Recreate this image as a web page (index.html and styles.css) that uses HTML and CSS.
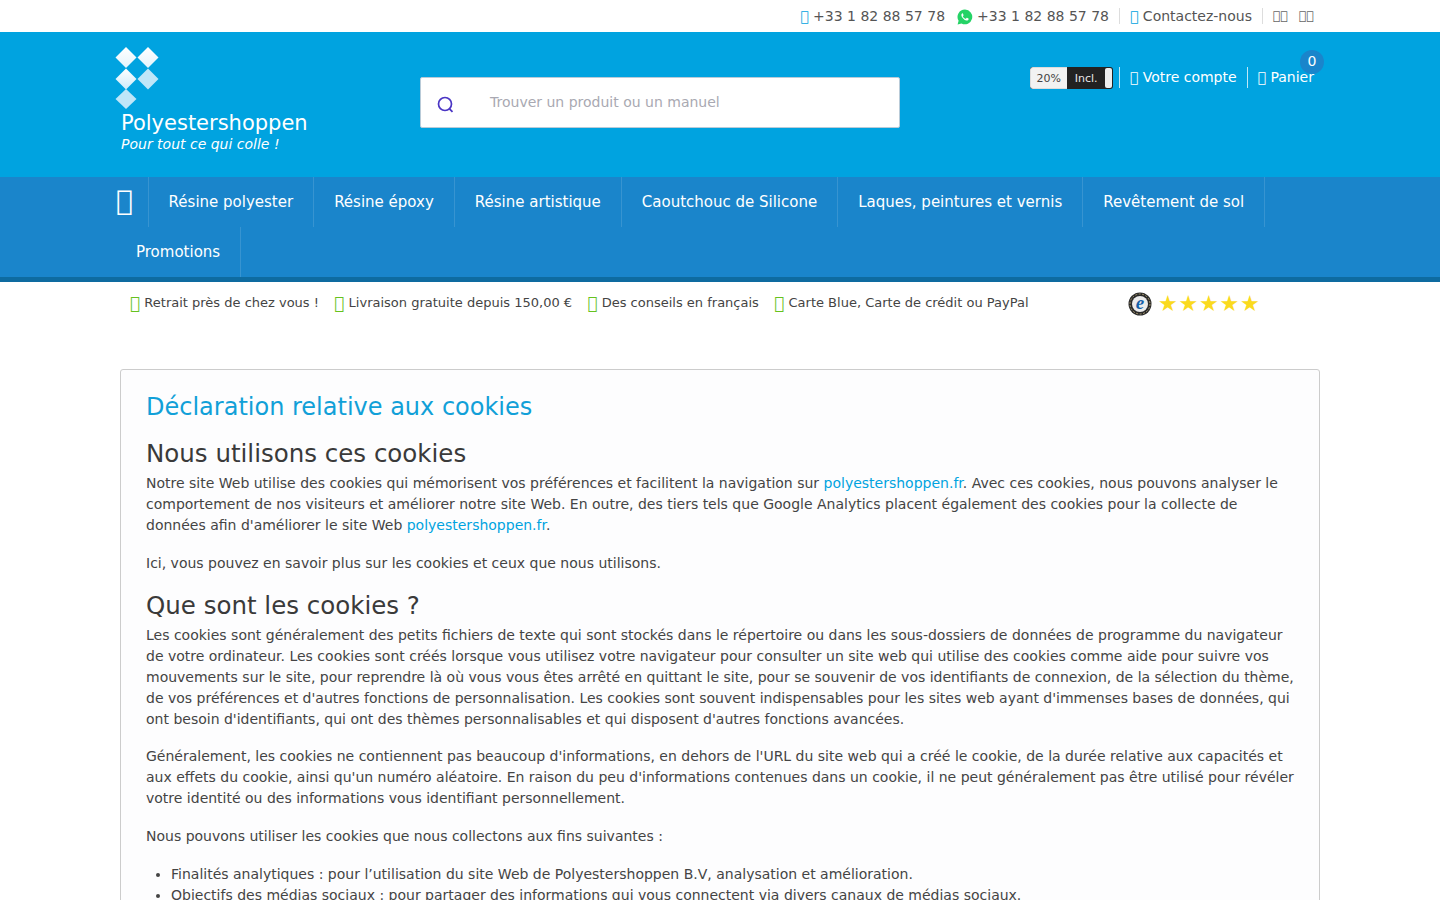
FILE: index.html
```html
<!DOCTYPE html>
<html lang="fr">
<head>
<meta charset="utf-8">
<title>Polyestershoppen</title>
<link rel="stylesheet" href="styles.css">
</head>
<body>
<div class="topbar">
  <div class="wrap topbar-in">
    <span class="top-item"><i class="ic-blue">&#xf095;</i> +33 1 82 88 57 78</span>
    <span class="top-item">
      <svg class="wa" viewBox="0 0 16 16" width="16" height="16"><path fill="#25d366" d="M8 .5a7.400 7.400 0 0 0-6.400 11.200L.6 15.500l3.900-1A7.400 7.400 0 1 0 8 .5z"/><path fill="#fff" d="M5.600 4.200c-.3 0-.8.3-1 .8-.5 1-.2 2.300.9 3.800 1.200 1.600 2.600 2.500 4 2.700.9.100 1.800-.4 2-1.100.1-.4.100-.7 0-.8l-1.500-.8c-.2-.1-.4 0-.5.100l-.6.800c-.1.100-.3.100-.5 0-1.100-.5-1.900-1.200-2.500-2.300-.1-.2 0-.3.100-.4l.5-.6c.1-.2.100-.3 0-.5l-.6-1.400c-.1-.2-.2-.3-.3-.3z"/></svg>+33 1 82 88 57 78
    </span>
    <span class="top-item sep"><i class="ic-blue">&#xf0e0;</i> Contactez-nous</span>
    <span class="top-item sep flags"><span>&#xf100;&#xf101;</span><span>&#xf102;&#xf103;</span></span>
  </div>
</div>

<header class="header">
  <div class="wrap header-in">
    <a class="brand">
      <svg class="logo" viewBox="0 0 44 62" width="44" height="62">
        <defs>
          <linearGradient id="g1" x1="0" y1="0" x2="0" y2="1"><stop offset="0" stop-color="#fff"/><stop offset="1" stop-color="#e4f4fc"/></linearGradient>
          <linearGradient id="g2" x1="0" y1="0" x2="0" y2="1"><stop offset="0" stop-color="#fff"/><stop offset="1" stop-color="#cdebfa"/></linearGradient>
        </defs>
        <path fill="url(#g1)" d="M11 0l10.500 10.500L11 21 .5 10.500z"/>
        <path fill="url(#g1)" d="M33 0l10.500 10.500L33 21 22.500 10.500z"/>
        <path fill="url(#g2)" d="M11 21.500l10.500 10.500L11 42.500.5 32z"/>
        <path fill="#bfe6f8" d="M33 21.500l10.500 10.500L33 42.500 22.500 32z"/>
        <path fill="#bfe6f8" d="M11 42l10.500 10L11 62 .5 52z"/>
      </svg>
      <span class="brand-name">Polyestershoppen</span>
      <span class="brand-tag">Pour tout ce qui colle !</span>
    </a>
    <div class="search">
      <svg class="search-ic" viewBox="0 0 18 18" width="18" height="18"><circle cx="8" cy="8" r="6.500" fill="none" stroke="#4a35c4" stroke-width="1.700"/><path d="M12.500 12.800l3 3" stroke="#4a35c4" stroke-width="1.800" fill="none"/></svg>
      <span class="search-ph">Trouver un produit ou un manuel</span>
    </div>
    <div class="account">
      <span class="vat"><span class="vat-a">20%</span><span class="vat-b">Incl.</span><span class="vat-k"></span></span>
      <span class="acc-item acc-first"><i>&#xf007;</i> Votre compte</span>
      <span class="acc-item acc-cart"><b class="badge">0</b><span class="acc-text"><i>&#xf07a;</i> Panier</span></span>
    </div>
  </div>
</header>

<nav class="nav">
  <div class="wrap nav-in">
    <a class="nav-home"><i>&#xf015;</i></a>
    <a class="nav-link">Résine polyester</a>
    <a class="nav-link">Résine époxy</a>
    <a class="nav-link">Résine artistique</a>
    <a class="nav-link">Caoutchouc de Silicone</a>
    <a class="nav-link">Laques, peintures et vernis</a>
    <a class="nav-link">Revêtement de sol</a>
    <a class="nav-link">Promotions</a>
  </div>
</nav>

<div class="usp">
  <div class="wrap usp-in">
    <span class="usp-item"><i>&#xf00c;</i> Retrait près de chez vous !</span>
    <span class="usp-item"><i>&#xf00c;</i> Livraison gratuite depuis 150,00 €</span>
    <span class="usp-item"><i>&#xf00c;</i> Des conseils en français</span>
    <span class="usp-item"><i>&#xf00c;</i> Carte Blue, Carte de crédit ou PayPal</span>
    <span class="rating">
      <svg class="seal" viewBox="0 0 24 24" width="24" height="24"><circle cx="12" cy="12" r="11.500" fill="#2a2a2a"/><circle cx="12" cy="12" r="10" fill="none" stroke="#a89a70" stroke-width="1" stroke-dasharray="2 1.500"/><circle cx="12" cy="12" r="8" fill="#ececec"/><text x="12" y="17" text-anchor="middle" class="seal-e">e</text></svg>
      <span class="stars">★★★★★</span>
    </span>
  </div>
</div>

<main class="wrap">
  <article class="card">
    <h1>Déclaration relative aux cookies</h1>
    <h2>Nous utilisons ces cookies</h2>
    <p>Notre site Web utilise des cookies qui mémorisent vos préférences et facilitent la navigation sur <a>polyestershoppen.fr</a>. Avec ces cookies, nous pouvons analyser le comportement de nos visiteurs et améliorer notre site Web. En outre, des tiers tels que Google Analytics placent également des cookies pour la collecte de données afin d'améliorer le site Web <a>polyestershoppen.fr</a>.</p>
    <p>Ici, vous pouvez en savoir plus sur les cookies et ceux que nous utilisons.</p>
    <h2>Que sont les cookies ?</h2>
    <p>Les cookies sont généralement des petits fichiers de texte qui sont stockés dans le répertoire ou dans les sous-dossiers de données de programme du navigateur de votre ordinateur. Les cookies sont créés lorsque vous utilisez votre navigateur pour consulter un site web qui utilise des cookies comme aide pour suivre vos mouvements sur le site, pour reprendre là où vous vous êtes arrêté en quittant le site, pour se souvenir de vos identifiants de connexion, de la sélection du thème, de vos préférences et d'autres fonctions de personnalisation. Les cookies sont souvent indispensables pour les sites web ayant d'immenses bases de données, qui ont besoin d'identifiants, qui ont des thèmes personnalisables et qui disposent d'autres fonctions avancées.</p>
    <p>Généralement, les cookies ne contiennent pas beaucoup d'informations, en dehors de l'URL du site web qui a créé le cookie, de la durée relative aux capacités et aux effets du cookie, ainsi qu'un numéro aléatoire. En raison du peu d'informations contenues dans un cookie, il ne peut généralement pas être utilisé pour révéler votre identité ou des informations vous identifiant personnellement.</p>
    <p>Nous pouvons utiliser les cookies que nous collectons aux fins suivantes :</p>
    <ul>
      <li>Finalités analytiques : pour l’utilisation du site Web de Polyestershoppen B.V, analysation et amélioration.</li>
      <li>Objectifs des médias sociaux : pour partager des informations qui vous connectent via divers canaux de médias sociaux.</li>
    </ul>
  </article>
</main>
</body>
</html>
```

FILE: styles.css
```css
* { box-sizing: border-box; }
html, body { margin: 0; padding: 0; height: 900px; overflow: hidden; }
body { font-family: "DejaVu Sans", sans-serif; font-size: 14px; line-height: 21px; color: #444; background: #fff; }
i { font-style: normal; }
.wrap { width: 1200px; margin: 0 auto; }

.topbar { height: 32px; background: #fff; }
.topbar-in { height: 32px; display: flex; justify-content: flex-end; align-items: center; padding-right: 6px; color: #555; }
.top-item { margin-left: 12px; white-space: nowrap; }
.top-item.sep { margin-left: 10px; border-left: 1px solid #ddd; padding-left: 10px; line-height: 16px; }
.ic-blue { color: #00a3e0; }
.wa { display: inline-block; vertical-align: -4px; margin-right: 4px; }
.flags { display: flex; gap: 11px; color: #666; font-size: 12.500px; }

.header { height: 145px; background: #00a3e0; }
.header-in { display: flex; position: relative; height: 145px; }
.brand { width: 300px; display: flex; flex-direction: column; color: #fff; padding-top: 15px; margin-left: -5px; }
.logo { display: block; }
.brand-name { font-size: 21px; line-height: 26px; margin-left: 6px; margin-top: 1px; }
.brand-tag { font-size: 14px; line-height: 18px; font-style: italic; margin-left: 6px; margin-top: -1px; }

.search { width: 480px; height: 51px; margin-top: 45px; margin-left: 5px; background: #fff; border: 1px solid #b9cbd8; border-radius: 2px; display: flex; align-items: center; padding-left: 16px; }
.search-ic { display: block; margin-top: 5px; }
.search-ph { color: #a9a9b2; margin-left: 35px; margin-top: -1px; }

.account { margin-left: auto; margin-top: 35px; height: 22px; display: flex; align-items: flex-start; padding-right: 6px; color: #fff; }
.vat { display: flex; width: 83px; height: 22px; border-radius: 3px; overflow: hidden; font-size: 11px; line-height: 23px; position: relative; background: #222; }
.vat-a { width: 37px; background: #f2f2f2; color: #444; text-align: center; border: 1px solid #dcdcdc; border-right: 0; border-radius: 3px 0 0 3px; line-height: 21px; }
.vat-b { width: 46px; color: #e8e8e8; padding-left: 8px; }
.vat-k { position: absolute; right: 1px; top: 1px; bottom: 1px; width: 7px; background: #eee; border-radius: 2px; }
.acc-item { margin-left: 6px; padding-left: 10px; border-left: 1px solid rgba(255,255,255,.75); height: 21px; line-height: 20px; white-space: nowrap; position: relative; }
.acc-cart { margin-left: 10px; }
.acc-text { position: relative; }
.badge { position: absolute; right: -10px; top: -17px; width: 24px; height: 24px; border-radius: 50%; background: #1a85cb; font-weight: normal; text-align: center; line-height: 22px; }

.nav { background: #1a85cb; border-bottom: 5px solid #0e6ba0; height: 105px; }
.nav-in { display: flex; flex-wrap: wrap; }
.nav-link, .nav-home { height: 50px; line-height: 50px; border-right: 1px solid rgba(255,255,255,.13); color: #fff; font-size: 15px; padding: 0 20px; white-space: nowrap; }
.nav-home { padding: 0; font-size: 28px; text-align: left; margin-left: -4px; width: 32.600px; }
.nav-home i { display: block; margin-top: -1px; }
.nav-link:last-child { padding-left: 16px; }

.usp { height: 87px; }
.usp-in { display: flex; padding: 10px 0 0 10px; color: #444; font-size: 13px; position: relative; }
.usp-item { margin-right: 15.300px; white-space: nowrap; line-height: 22px; }
.usp-item i { color: #66c21f; font-size: 17px; vertical-align: -2px; }
.rating { position: absolute; left: 1008px; top: 9px; display: flex; align-items: center; gap: 6px; }
.seal { display: block; }
.seal-e { font-size: 19px; font-style: italic; font-weight: bold; fill: #1460a8; font-family: "Liberation Serif", serif; }
.stars { color: #fada1e; font-size: 22px; letter-spacing: .800px; line-height: 24px; margin-top: 1px; }

.card { border: 1px solid #ccc; border-radius: 3px; padding: 19px 25px; background: #fdfdfe; height: 800px; }
.card h1 { margin: 0 0 14px; font-size: 24px; line-height: 36px; font-weight: normal; color: #11a0d8; }
.card h2 { margin: 0 0 4px; font-size: 24.500px; line-height: 30px; font-weight: normal; color: #3a3a3a; }
.card p { margin: 0 0 16.800px; }
.card a { color: #00a3e0; }
.card ul { margin: 0; padding-left: 25px; }
```
